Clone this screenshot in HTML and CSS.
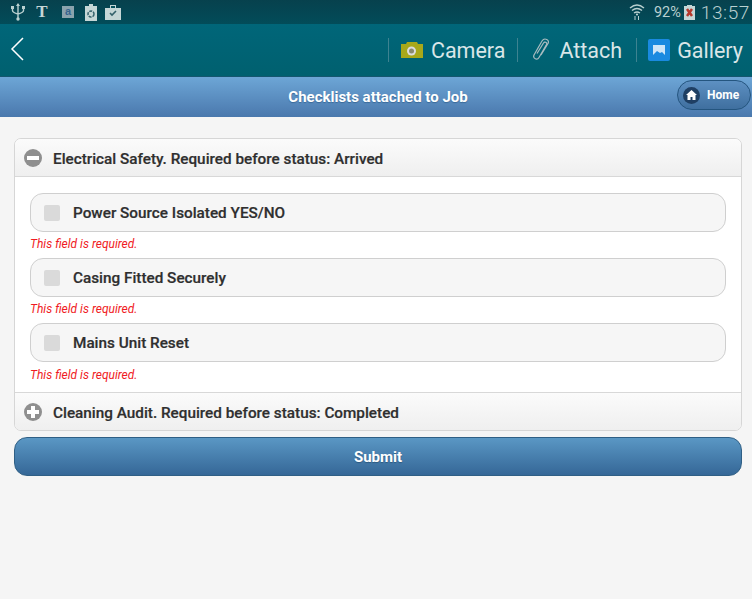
FILE: index.html
```html
<!DOCTYPE html>
<html lang="en">
<head>
<meta charset="utf-8">
<title>Checklists attached to Job</title>
<link rel="stylesheet" href="styles.css">
</head>
<body>
<div class="status">
  <div class="status-left">
    <svg class="si" width="16" height="18" viewBox="0 0 16 18"><path d="M8 1v15M2.500 5v2.500q0 2 5.500 3.500q5.500-1.500 5.500-3.500V5" fill="none" stroke="#b9d0d0" stroke-width="1.400"/><path d="M8 0l-2 3h4zM1 3h3v3H1zM12 3h3v3h-3z" fill="#b9d0d0"/><circle cx="8" cy="16" r="1.700" fill="#b9d0d0"/></svg>
    <span class="nyt">T</span>
    <span class="amz">a</span>
    <svg class="si" width="12" height="17" viewBox="0 0 12 17"><path d="M4 0h4v2h4v15H0V2h4z" fill="#c5d6d6"/><circle cx="6" cy="10" r="3" fill="none" stroke="#33606a" stroke-width="1.500" stroke-dasharray="3 1"/></svg>
    <svg class="si" width="16" height="16" viewBox="0 0 16 16"><path d="M0 4h5V1h6v3h5v12H0z" fill="#c5d6d6"/><path d="M6 2h4v2H6z" fill="#07505c"/><path d="M5 9l2 2 4-4" fill="none" stroke="#33606a" stroke-width="1.600"/></svg>
  </div>
  <div class="status-right">
    <svg class="wifi" width="16" height="18" viewBox="0 0 16 18"><path d="M1 5q7-6 14 0M3 7.500q5-4 10 0M5 10q3-2 6 0" fill="none" stroke="#b9d0d0" stroke-width="1.400"/><circle cx="8" cy="11.500" r="1.100" fill="#b9d0d0"/><path d="M6 13v4M9.500 13v4" stroke="#b9d0d0" stroke-width="1"/></svg>
    <span class="pct">92%</span>
    <svg class="batt" width="11" height="15" viewBox="0 0 11 15"><path d="M3 0h5v1h3v14H0V1h3z" fill="#c5d6d6"/><path d="M3 4l5 7M8 4l-5 7" stroke="#b5382c" stroke-width="2.500"/></svg>
    <span class="clock">13:57</span>
  </div>
</div>
<div class="actionbar">
  <svg class="back" width="14" height="24" viewBox="0 0 14 24"><path d="M13 1L2 12l11 11" fill="none" stroke="#fff" stroke-width="1.500"/></svg>
  <div class="actions">
    <div class="action">
      <svg width="24" height="18" viewBox="0 0 24 18"><path d="M1 3h5l1-2h10l1 2h5v14H1z" fill="#a8a81a"/><circle cx="11.500" cy="10" r="4.500" fill="#ddd"/><circle cx="11.500" cy="10" r="2.500" fill="#8a8a70"/></svg>
      <span>Camera</span>
    </div>
    <div class="action">
      <svg width="19" height="24" viewBox="0 0 19 24"><path d="M6 15.500L12.500 5c1-2 4-.5 3 1.500L8 19.500c-1.800 3-6.500 1-5-2.500L11 3c2.500-4 8-1 6 2.500L10 17" fill="none" stroke="#a9bcc0" stroke-width="1.200"/></svg>
      <span>Attach</span>
    </div>
    <div class="action">
      <svg width="22" height="22" viewBox="0 0 22 22"><rect width="22" height="22" rx="2" fill="#1a8ae0"/><rect x="5" y="6" width="12" height="10" fill="#cfe6f8"/><path d="M5 16l4-4 3 2 2-1 3 3z" fill="#1a8ae0"/></svg>
      <span>Gallery</span>
    </div>
  </div>
</div>
<header class="pagehead">
  <h1>Checklists attached to Job</h1>
  <a class="home">
    <span class="home-ic"><svg width="11" height="10" viewBox="0 0 11 10"><path d="M5.500 0L11 5H9.500v5H6.500V7h-2v3H1.500V5H0z" fill="#fff"/></svg></span>
    Home
  </a>
</header>
<main class="content">
  <section class="accordion">
    <div class="acc-head">
      <span class="acc-ic"><span class="bar-h"></span></span>
      <span class="label">Electrical Safety. Required before status: Arrived</span>
    </div>
    <div class="acc-body">
      <div class="field">
        <div class="check"><span class="box"></span><span class="label">Power Source Isolated YES/NO</span></div>
        <p class="err">This field is required.</p>
      </div>
      <div class="field">
        <div class="check"><span class="box"></span><span class="label">Casing Fitted Securely</span></div>
        <p class="err">This field is required.</p>
      </div>
      <div class="field">
        <div class="check"><span class="box"></span><span class="label">Mains Unit Reset</span></div>
        <p class="err">This field is required.</p>
      </div>
    </div>
    <div class="acc-head closed">
      <span class="acc-ic"><span class="bar-h"></span><span class="bar-v"></span></span>
      <span class="label">Cleaning Audit. Required before status: Completed</span>
    </div>
  </section>
  <button class="submit">Submit</button>
</main>
</body>
</html>
```
FILE: styles.css
```css
* { box-sizing: border-box; }
html, body { margin: 0; padding: 0; }
body {
  width: 752px;
  height: 599px;
  overflow: hidden;
  background: #f5f5f5;
  font-family: Roboto, "Liberation Sans", sans-serif;
}
.status {
  height: 24px;
  background: linear-gradient(#07414d, #024c59);
  display: flex;
  justify-content: space-between;
  align-items: center;
}
.status-left {
  display: flex;
  align-items: center;
  padding-left: 10px;
  gap: 8px;
}
.si { display: block; }
.nyt {
  width: 16px;
  text-align: center;
  font: bold 17px/18px "Liberation Serif", serif;
  color: #c5d6d6;
}
.amz {
  width: 12px;
  height: 12px;
  margin-left: 4px;
  margin-right: 3px;
  background: #8ba3ad;
  color: #37648f;
  font: bold 11px/11px "Liberation Sans", sans-serif;
  text-align: center;
}
.status-right {
  display: flex;
  align-items: center;
  color: #b9d0d0;
  padding-right: 2px;
}
.wifi { margin-right: 9px; }
.pct { font-size: 14.500px; margin-right: 3px; }
.batt { margin-right: 6px; }
.clock { font-size: 19px; letter-spacing: 0.600px; font-weight: 300; }
.actionbar {
  height: 53px;
  background: linear-gradient(#006679, #00606f);
  border-bottom: 1px solid #14566f;
  display: flex;
  align-items: center;
  justify-content: space-between;
  padding: 0 9px 0 10px;
}
.back { display: block; margin-bottom: 2px; }
.actions { display: flex; }
.action {
  display: flex;
  align-items: center;
  height: 24px;
  gap: 7px;
  padding: 0 12px 0 11px;
  border-left: 1px solid #3d8391;
  color: #d9e6e8;
  font-size: 22px;
}
.action span { font-weight: 400; font-size: 21.500px; padding-top: 1px; }
.action:last-child { padding-right: 0; }
.action:nth-child(2) { gap: 9px; padding-left: 13px; padding-right: 14px; }
.pagehead {
  height: 40px;
  background: linear-gradient(#6da6d6, #4a78ad);
  position: relative;
  display: flex;
  align-items: center;
  justify-content: center;
  padding-left: 4px;
}
.pagehead h1 {
  margin: 0;
  font-size: 15px;
  font-weight: 700;
  color: #fff;
  text-shadow: 0 1px 1px #3b6a99;
}
.home {
  position: absolute;
  right: 1px;
  top: 3px;
  width: 74px;
  height: 30px;
  border: 1px solid #24557f;
  border-radius: 15px;
  background: linear-gradient(#5d90c2, #3f6f9f);
  color: #fff;
  font-size: 12px;
  font-weight: 700;
  display: flex;
  align-items: center;
  gap: 7px;
  padding-left: 5px;
  padding-bottom: 1px;
}
.home-ic {
  width: 17px;
  height: 17px;
  margin-top: 1px;
  border-radius: 50%;
  background: #1f3f63;
  display: flex;
  align-items: center;
  justify-content: center;
}
.content { padding: 21px 10px 0 14px; }
.accordion {
  border: 1px solid #d6d6d6;
  border-radius: 7px;
  overflow: hidden;
  background: #fff;
}
.acc-head {
  height: 38px;
  background: linear-gradient(#fbfbfb, #efefef);
  border-bottom: 1px solid #d8d8d8;
  display: flex;
  align-items: center;
  gap: 11px;
  padding-left: 9px;
}
.label {
  font-size: 15.300px;
  font-weight: 500;
  -webkit-text-stroke: 0.200px currentColor;
  color: #2f2f2f;
  padding-top: 2px;
}
.check .label { padding-top: 1px; }
.acc-head.closed { border-bottom: 0; border-top: 1px solid #d8d8d8; }
.acc-ic {
  width: 18px;
  height: 18px;
  border-radius: 50%;
  background: #8f8f8f;
  position: relative;
  flex: none;
}
.bar-h, .bar-v { position: absolute; background: #fff; }
.bar-h { left: 3px; right: 3px; top: 7px; height: 4px; }
.bar-v { top: 3px; bottom: 3px; left: 7px; width: 4px; }
.acc-body { padding: 16px 15px 0; height: 215px; }
.field { height: 65px; }
.check {
  height: 39px;
  border: 1px solid #cfcfcf;
  border-radius: 13px;
  background: #f6f6f6;
  display: flex;
  align-items: center;
  gap: 13px;
  padding-left: 13px;
}
.box {
  width: 16px;
  height: 16px;
  border-radius: 2px;
  background: #dadada;
  flex: none;
}
.err {
  margin: 5px 0 0;
  font-size: 12px;
  line-height: 15px;
  font-style: italic;
  color: #f01b24;
}
.field:last-child .err { margin-top: 6px; }
.submit {
  display: block;
  width: 100%;
  height: 39px;
  margin-top: 6px;
  border: 1px solid #2f5f85;
  border-radius: 13px;
  background: linear-gradient(#5a97c4, #356797);
  color: #fff;
  font-family: inherit;
  font-size: 15px;
  font-weight: 700;
  text-shadow: 0 1px 1px #2d5a80;
}
```
